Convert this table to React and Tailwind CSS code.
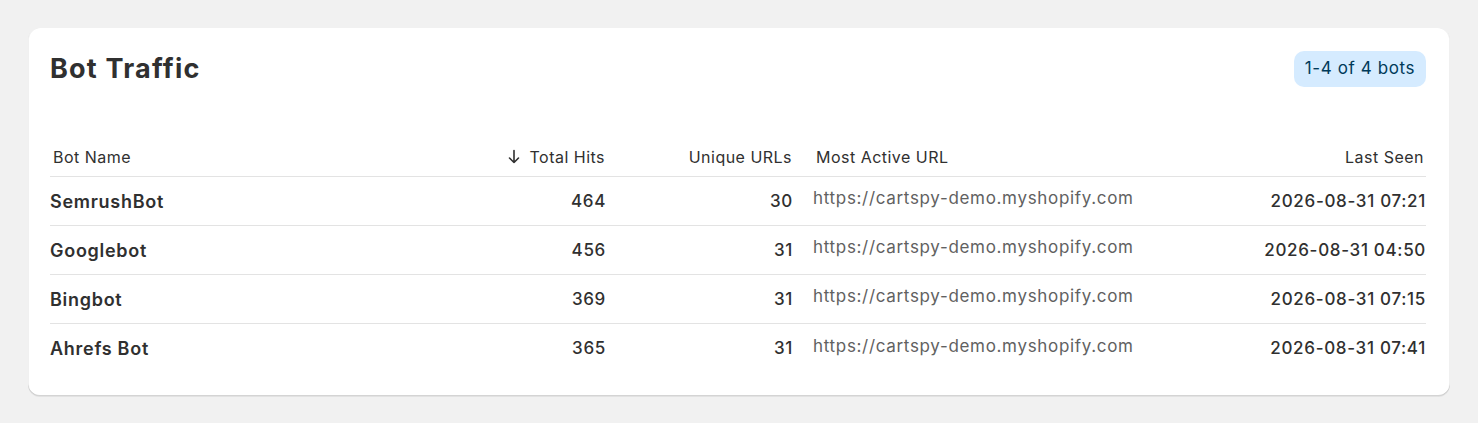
import React from "react";

const rows = [
  { name: "SemrushBot", hits: 464, urls: 30, url: "https://cartspy-demo.myshopify.com", seen: "2026-08-31 07:21" },
  { name: "Googlebot", hits: 456, urls: 31, url: "https://cartspy-demo.myshopify.com", seen: "2026-08-31 04:50" },
  { name: "Bingbot", hits: 369, urls: 31, url: "https://cartspy-demo.myshopify.com", seen: "2026-08-31 07:15" },
  { name: "Ahrefs Bot", hits: 365, urls: 31, url: "https://cartspy-demo.myshopify.com", seen: "2026-08-31 07:41" },
];

export default function App() {
  return (
    <div className="min-h-[423px] bg-[#f1f1f1] pt-[28px] pl-[28px] pr-[28px]" style={{ fontFamily: "Inter, 'Noto Sans', sans-serif" }}>
      <div className="w-[1422px] rounded-[12px] bg-white pl-[22px] pr-[24px] pt-[19px] pb-[24px] shadow-[0_1px_0_0_rgba(26,26,26,0.07),0_-1px_0_0_rgba(0,0,0,0.17)_inset,1px_0_0_0_rgba(0,0,0,0.06)_inset,-1px_0_0_0_rgba(0,0,0,0.06)_inset]">
        <div className="flex items-center justify-between h-[44px]">
          <h2 className="text-[27px] leading-[36px] font-bold text-[#303030] tracking-[0.045em]">Bot Traffic</h2>
          <span className="rounded-[10px] bg-[#d5ebff] px-[11px] h-[36px] flex items-center text-[17px] tracking-[0.035em] text-[#003a5a]">1-4 of 4 bots</span>
        </div>
        <table className="mt-[45px] w-full border-collapse table-fixed">
          <colgroup>
            <col className="w-[400px]" />
            <col className="w-[156px]" />
            <col className="w-[187px]" />
            <col />
            <col className="w-[220px]" />
          </colgroup>
          <thead>
            <tr className="h-[40px] border-b border-[#e3e3e3] text-[16px] leading-[24px] tracking-[0.03em] text-[#303030]">
              <th className="text-left font-normal pl-[3px] pb-[7px] align-bottom">Bot Name</th>
              <th className="font-normal pr-[1px] pb-[7px] align-bottom">
                <div className="flex items-center justify-end gap-[9px] h-[24px]">
                  <svg width="14" height="18" viewBox="0 0 14 18" fill="none" stroke="#303030" strokeWidth="1.6" strokeLinecap="round" strokeLinejoin="round">
                    <path d="M7 2.5v12M2.5 10 7 14.5l4.5-4.5" />
                  </svg>
                  <span>Total Hits</span>
                </div>
              </th>
              <th className="text-right font-normal pr-[1px] pb-[7px] align-bottom">Unique URLs</th>
              <th className="text-left font-normal pl-[23px] pb-[7px] align-bottom">Most Active URL</th>
              <th className="text-right font-normal pr-[2px] pb-[7px] align-bottom">Last Seen</th>
            </tr>
          </thead>
          <tbody>
            {rows.map((r, i) => (
              <tr key={r.name} className={`h-[49px] ${i < rows.length - 1 ? "border-b border-[#e3e3e3]" : ""}`}>
                <td className="text-left pt-[2px] text-[18px] font-semibold tracking-[0.04em] text-[#303030]">{r.name}</td>
                <td className="text-right pt-[2px] text-[17px] font-medium tracking-[0.04em] text-[#303030]">{r.hits}</td>
                <td className="text-right pt-[2px] text-[17px] font-medium tracking-[0.04em] text-[#303030]">{r.urls}</td>
                <td className="text-left pl-[20px] text-[17px] tracking-[0.04em] text-[#616161] pb-[3px]">{r.url}</td>
                <td className="text-right pt-[2px] text-[17px] font-medium tracking-[0.04em] text-[#303030]">{r.seen}</td>
              </tr>
            ))}
          </tbody>
        </table>
      </div>
    </div>
  );
}
